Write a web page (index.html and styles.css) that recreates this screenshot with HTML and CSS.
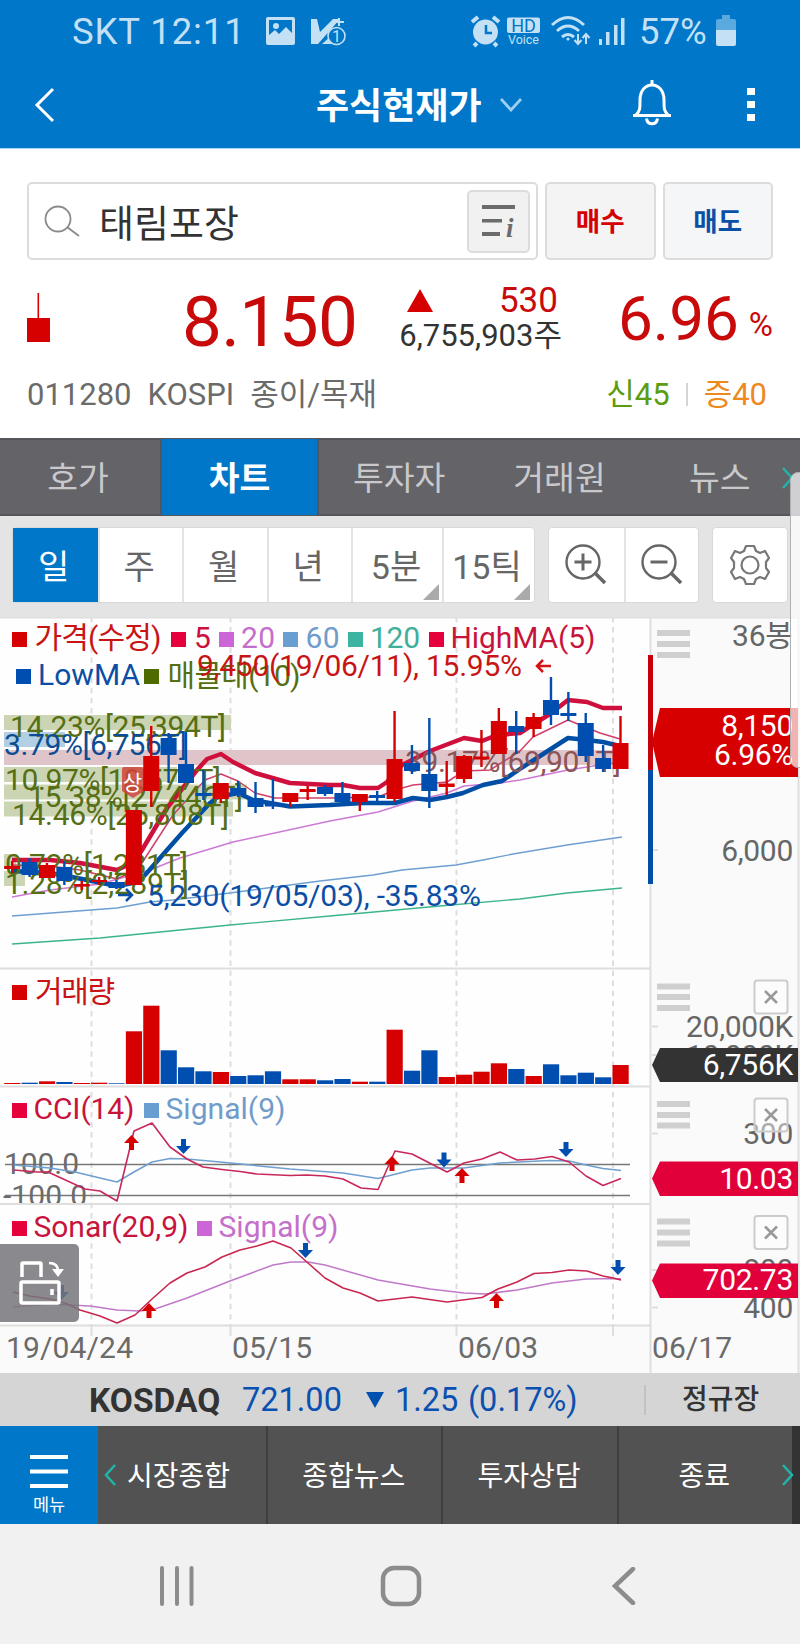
FILE: index.html
```html
<!DOCTYPE html>
<html lang="ko">
<head>
    <meta charset="UTF-8">
    <meta name="viewport" content="width=device-width, initial-scale=1.0">
    <title>주식현재가</title>
    <link rel="stylesheet" href="styles.css">
</head>
<body>
    <header class="top">
        <div class="status-bar">
            <span class="status-text carrier">SKT 12:11</span>
            <svg class="status-left" width="82" height="34" viewBox="265 13 82 34">
                <path fill="#c3e0f5" fill-rule="evenodd" d="M268 16h25a2 2 0 0 1 2 2v24a2 2 0 0 1-2 2h-25a2 2 0 0 1-2-2V18a2 2 0 0 1 2-2zm1 3v15l6-5 4 4 7-7 6 6V19zm4 6a3 3 0 1 1 6 0 3 3 0 0 1-6 0z"/>
                <path fill="#c3e0f5" d="M311 18h6l3 13 13-13h7L318 43h-7z"/>
                <path fill="#c3e0f5" d="M322 43l10-9v9z"/>
                <path stroke="#c3e0f5" stroke-width="2" fill="none" d="M339 17v8M334 21h10"/>
                <circle cx="336.500" cy="35" r="8.500" fill="#0077c8" stroke="#c3e0f5" stroke-width="1.600"/>
                <text x="336.500" y="41" text-anchor="middle" font-size="16" fill="#c3e0f5">1</text>
            </svg>
            <svg class="status-right" width="160" height="34" viewBox="469 13 160 34">
                <!-- alarm -->
                <g fill="none" stroke="#c3e0f5">
                    <circle cx="486.500" cy="31" r="12.500" fill="#c3e0f5" stroke="none"/>
                    <path stroke-width="4" d="M473 21l6-5M500 21l-6-5M478 42l-3 3M495 42l3 3"/>
                    <path stroke="#0077c8" stroke-width="2.500" d="M487 24v8h6"/>
                </g>
                <!-- HD voice -->
                <rect x="508" y="16.500" width="33" height="15.500" rx="2" fill="#c3e0f5"/>
                <text x="524.500" y="30.500" text-anchor="middle" font-size="18" fill="#0077c8">HD</text>
                <text x="524.500" y="43" text-anchor="middle" font-size="12.500" fill="#c3e0f5">Voice</text>
                <!-- wifi -->
                <g fill="none" stroke="#c3e0f5" stroke-width="3">
                    <path d="M553 24q16-15 32 0M558 30q11-10 22 0M563 36q6-5 12 0"/>
                    <circle cx="569" cy="38" r="1.500" fill="#c3e0f5" stroke="none"/>
                    <path stroke-width="2" d="M579 33v10M575.500 39l3.500 4 3.500-4M587 43V33M583.500 37l3.500-4 3.500 4"/>
                </g>
                <!-- signal -->
                <path fill="#c3e0f5" d="M600 38h3v6h-3zM607 31h3.500v13H607zM615 24h3.500v20H615zM622 17h3.500v27H622z"/>
            </svg>
            <span class="status-text battery-text">57%</span>
            <svg class="battery" width="22" height="32" viewBox="0 0 22 32">
                <path fill="#5aa9df" d="M7 0h8v4h4a2 2 0 0 1 2 2v10H1V6a2 2 0 0 1 2-2h4z"/>
                <path fill="#c3e0f5" d="M1 15h20v14a2 2 0 0 1-2 2H3a2 2 0 0 1-2-2z"/>
            </svg>
        </div>
        <div class="title-bar">
            <svg class="back" width="22" height="36" viewBox="0 0 22 36"><path d="M19 2L3 18l16 16" fill="none" stroke="#fff" stroke-width="3"/></svg>
            <h1 class="title">주식현재가</h1>
            <svg class="title-arrow" width="22" height="14" viewBox="0 0 22 14"><path d="M1 1l10 11L21 1" fill="none" stroke="#9fd0f2" stroke-width="2.800"/></svg>
            <svg class="bell" width="40" height="46" viewBox="0 0 40 46">
                <g fill="none" stroke="#fff" stroke-width="3">
                    <path d="M20 0v5M1 35.500h38M4 35c4-4 4-6 4-15 0-9 5-15 12-15s12 6 12 15c0 9 0 11 4 15"/>
                    <path d="M14.500 38.500c1 7 10 7 11 0"/>
                </g>
            </svg>
            <svg class="more" width="8" height="36" viewBox="0 0 8 36"><path fill="#fff" d="M0 1h8v7H0zM0 14h8v7H0zM0 27h8v7H0z"/></svg>
        </div>
    </header>

    <section class="quote">
        <div class="search-row">
            <div class="search-box">
                <svg width="36" height="32" viewBox="0 0 36 32"><g fill="none" stroke="#8a8a8a" stroke-width="1.800"><circle cx="14" cy="14" r="12.500"/><path d="M23 22l12 9"/></g></svg>
                <span class="stock-name">태림포장</span>
                <span class="info-button">
                    <svg width="36" height="36" viewBox="0 0 36 36">
                        <path fill="#6b6b6b" d="M1 2h33v4H1zM1 16h20v3.500H1zM1 29h18v4H1z"/>
                        <text x="25" y="34" font-style="italic" font-weight="bold" font-size="27" fill="#6b6b6b" class="serif">i</text>
                    </svg>
                </span>
            </div>
            <button class="order buy">매수</button>
            <button class="order sell">매도</button>
        </div>
        <div class="price-row">
            <svg class="mini-candle" width="23" height="50" viewBox="0 0 23 50"><path fill="#d60000" d="M10.500 0h1.600v25H23v24H0V25h10.500z"/></svg>
            <span class="price">8.150</span>
            <div class="change">
                <div class="change-top">
                    <svg width="26" height="23" viewBox="0 0 26 23"><path fill="#d60000" d="M13 0l13 23H0z"/></svg>
                    <span>530</span>
                </div>
                <div class="volume">6,755,903주</div>
            </div>
            <span class="rate">6.96</span>
            <span class="percent">%</span>
        </div>
        <div class="info-row">
            <span>011280</span>
            <span>KOSPI</span>
            <span>종이/목재</span>
            <span class="credit">신45</span>
            <span class="bar"></span>
            <span class="margin">증40</span>
        </div>
    </section>

    <nav class="tabs">
        <a class="tab">호가</a>
        <a class="tab active">차트</a>
        <a class="tab">투자자</a>
        <a class="tab">거래원</a>
        <a class="tab">뉴스</a>
        <svg class="tabs-next" width="12" height="22" viewBox="0 0 12 22"><path d="M1 1l9 10-9 10" fill="none" stroke="#1fb5ac" stroke-width="2.500"/></svg>
    </nav>

    <div class="toolbar">
        <div class="group periods">
            <span class="cell on">일</span>
            <span class="cell">주</span>
            <span class="cell">월</span>
            <span class="cell">년</span>
            <span class="cell wide">5분</span>
            <span class="cell wide">15틱</span>
        </div>
        <div class="group zoom">
            <span class="cell">
                <svg width="42" height="42" viewBox="0 0 42 42"><g fill="none" stroke="#666" stroke-width="2.400"><circle cx="18" cy="18" r="16.500"/><path stroke-width="3" d="M9.500 18h17M18 9.500v17"/><path stroke-width="3.500" d="M30 29l10 10"/></g></svg>
            </span>
            <span class="cell">
                <svg width="42" height="42" viewBox="0 0 42 42"><g fill="none" stroke="#666" stroke-width="2.400"><circle cx="18" cy="18" r="16.500"/><path stroke-width="3" d="M9.500 18h17"/><path stroke-width="3.500" d="M30 29l10 10"/></g></svg>
            </span>
        </div>
        <div class="group settings">
            <svg width="42" height="42" viewBox="0 0 42 42">
                <g fill="none" stroke="#777" stroke-width="2.200" stroke-linejoin="round">
                    <circle cx="21" cy="21" r="8.500"/>
                    <path d="M17 2h8l2 5 4 2 5-2 4 7-3 4v6l3 4-4 7-5-2-4 2-2 5h-8l-2-5-4-2-5 2-4-7 3-4v-6l-3-4 4-7 5 2 4-2z"/>
                </g>
            </svg>
        </div>
    </div>

    <main class="chart-area">
        <svg class="chart" id="chart" width="800" height="756" viewBox="0 617 800 756">
            <rect x="0" y="617" width="800" height="756" fill="#fefefe"/>
            <rect x="652" y="617" width="148" height="756" fill="#fafafa"/>
            <rect x="0" y="1326" width="800" height="47" fill="#fafafa"/>

            <!-- grid -->
            <g fill="none" stroke="#dedede" stroke-width="2">
                <path stroke-dasharray="5.500 4.600" d="M91.500 617v709M230.500 617v709M456.500 617v709M613 617v709"/>
                <path d="M0 617.500h800M0 968.500h650M0 1086.500h650M0 1204h650M0 1325.500h650M650.500 617v756M798.500 617v756"/>
                <path d="M91.500 1326v10M230.500 1326v10M456.500 1326v10M613 1326v10M652 850h6M652 1026.500h6M652 1055h6M652 1133.500h6M652 1270h6M652 1307.500h6"/>
            </g>

            <!-- volume profile -->
            <g fill="#ccd5b3">
                <rect x="4" y="715" width="227" height="15"/>
                <rect x="4" y="767" width="173" height="15"/>
                <rect x="4" y="784.500" width="243" height="15"/>
                <rect x="4" y="801.500" width="229" height="15"/>
                <rect x="4" y="854" width="12" height="15"/>
                <rect x="4" y="871" width="21" height="15"/>
            </g>
            <rect x="4" y="732" width="61" height="15" fill="#b3cfe4"/>
            <rect x="4" y="750" width="618" height="15" fill="#dfc5c9"/>

            <g id="averages"></g>
            <g class="profile-text">
                <text x="10" y="737" textLength="216">14.23%[25,394T]</text>
                <text x="4" y="755" textLength="183" fill="#0b4c94">3.79%[6,756T]</text>
                <text x="5" y="790" textLength="216">10.97%[19,577T]</text>
                <text x="28" y="806.500" textLength="215">15.38%[27,446T]</text>
                <text x="12" y="825" textLength="217">14.46%[25,808T]</text>
                <text x="5" y="875" textLength="183">0.72%[1,281T]</text>
                <text x="5" y="893.500" textLength="184">1.28%[2,289T]</text>
                <text x="405" y="772" textLength="216" fill="#8c5557">39.17%[69,901T]</text>
            </g>
            <path fill="#d0443b" fill-opacity=".85" d="M124 767h17q3 0 3 3v21l-11 7-11-7v-21q0-3 2-3z"/>
            <text x="132.500" y="790" text-anchor="middle" font-size="21" fill="#fff">상</text>
            <g id="candles"></g>

            <!-- legends -->
            <g class="legend">
                <rect x="12" y="632" width="15" height="15" fill="#d60000"/><text x="34.500" y="648" textLength="127" fill="#c81414">가격(수정)</text>
                <rect x="171" y="632" width="15" height="15" fill="#e6003c"/><text x="194" y="647.500" fill="#cc1040">5</text>
                <rect x="219" y="632" width="15" height="15" fill="#cc66d6"/><text x="241" y="647.500" textLength="34" fill="#c46fcb">20</text>
                <rect x="283" y="632" width="15" height="15" fill="#699fd0"/><text x="305.500" y="647.500" textLength="34" fill="#6f9ccb">60</text>
                <rect x="348" y="632" width="15" height="15" fill="#3cb4a0"/><text x="370" y="647.500" textLength="50" fill="#3fae9a">120</text>
                <rect x="429" y="632" width="15" height="15" fill="#e6003c"/><text x="450.500" y="647.500" textLength="145" fill="#c8143c">HighMA(5)</text>
                <rect x="16" y="669" width="15" height="15" fill="#004fb0"/><text x="38" y="685" textLength="102" fill="#0b4ea5">LowMA</text>
                <rect x="144" y="669" width="15" height="15" fill="#4d6b00"/><text x="167.500" y="685.500" textLength="133" fill="#566f14">매물대(10)</text>
                <rect x="12" y="985" width="15" height="15" fill="#d60000"/><text x="35" y="1001.500" textLength="80" fill="#c81414">거래량</text>
                <rect x="12" y="1103" width="15" height="15" fill="#e6003c"/><text x="33.500" y="1118.500" textLength="101" fill="#c8143c">CCI(14)</text>
                <rect x="144" y="1103" width="15" height="15" fill="#699fd0"/><text x="165.500" y="1118.500" textLength="120" fill="#6f9ccb">Signal(9)</text>
                <rect x="12" y="1221" width="15" height="15" fill="#e6003c"/><text x="33.500" y="1236.500" textLength="155" fill="#c8143c">Sonar(20,9)</text>
                <rect x="197" y="1221" width="15" height="15" fill="#cc66d6"/><text x="218.500" y="1236.500" textLength="120" fill="#c46fcb">Signal(9)</text>
                <text x="197" y="676" textLength="325" fill="#c81414">9,450(19/06/11), 15.95%</text>
                <text x="147" y="905.500" textLength="334" fill="#0b4ea5">5,230(19/05/03), -35.83%</text>
            </g>
            <path d="M551 666h-14M543 660l-6 6 6 6" fill="none" stroke="#d61414" stroke-width="2.500"/>
            <path d="M118 895h14M126 889l6 6-6 6" fill="none" stroke="#0b4ea5" stroke-width="2.500"/>

            <g id="volumes"></g>

            <!-- CCI levels -->
            <clipPath id="cciClip"><rect x="0" y="1087" width="650" height="116"/></clipPath>
            <g clip-path="url(#cciClip)">
                <path d="M5 1164.500h625M5 1195.500h625" stroke="#777" stroke-width="1.400"/>
                <text class="level" x="4" y="1174" textLength="75">100.0</text>
                <text class="level" x="3" y="1205.500" textLength="84">-100.0</text>
            </g>
            <g id="indicators"></g>
            <g id="signals"></g>

            <!-- price axis -->
            <path d="M650.500 655v115" stroke="#c8000a" stroke-width="5"/>
            <path d="M650.500 770v114" stroke="#004fa5" stroke-width="5"/>
            <g class="axis">
                <text x="792.500" y="646">36봉</text>
                <text x="793" y="860.500">6,000</text>
                <text x="793" y="1036.500">20,000K</text>
                <text x="793" y="1065.500">10,000K</text>
                <text x="793" y="1143.500">300</text>
                <text x="793" y="1280">800</text>
                <text x="793" y="1318">400</text>
            </g>
            <path fill="#cfcfcf" d="M657 630h33v6h-33zM657 641h33v6h-33zM657 652h33v6h-33zM657 983.500h33v6h-33zM657 994h33v6h-33zM657 1005h33v6h-33zM657 1101h33v6h-33zM657 1112h33v6h-33zM657 1122.500h33v6h-33zM657 1218.500h33v6h-33zM657 1229.500h33v6h-33zM657 1240.500h33v6h-33z"/>
            <g fill="#fff" fill-opacity=".45" stroke="#ccc" stroke-width="2">
                <rect x="754.500" y="980.500" width="33" height="33" rx="3"/>
                <rect x="754.500" y="1098.500" width="33" height="33" rx="3"/>
                <rect x="754.500" y="1216" width="33" height="33" rx="3"/>
            </g>
            <path d="M765 991l12 12M777 991l-12 12M765 1109l12 12M777 1109l-12 12M765 1226.500l12 12M777 1226.500l-12 12" stroke="#999" stroke-width="2.500"/>
            <path fill="#d60000" d="M652 742l8-34h138v69H660z"/>
            <path fill="#333" d="M652 1065l8-17h138v34H660z"/>
            <path fill="#e1003a" d="M652 1178.500l8-17h138v34.500H660zM652 1280.500l8-17h138v34.500H660z"/>
            <g class="axis tag">
                <text x="793" y="736">8,150</text>
                <text x="793" y="765">6.96%</text>
                <text x="793" y="1074.500">6,756K</text>
                <text x="793" y="1188.500">10.03</text>
                <text x="793" y="1290">702.73</text>
            </g>
            <g class="dates">
                <text x="6" y="1358" textLength="127">19/04/24</text>
                <text x="232" y="1358" textLength="80">05/15</text>
                <text x="458" y="1358" textLength="80">06/03</text>
                <text x="652" y="1358" textLength="80">06/17</text>
            </g>
        </svg>
        <div class="rotate">
            <svg width="46" height="44" viewBox="0 0 46 44">
                <g fill="none" stroke="#fff" stroke-width="3.500">
                    <path d="M3 16V3q0-1 1-1h17q1 0 1 1v13"/>
                    <rect x="2" y="21" width="38" height="21" rx="1.500"/>
                    <path d="M33 28v6"/>
                    <path stroke-width="2.500" d="M30 2q9 0 9 8"/>
                </g>
                <path fill="#fff" d="M33 8h12l-6 8z"/>
            </svg>
        </div>
        <div class="drawer-handle"></div>
    </main>

    <div class="index-bar">
        <strong class="index-name">KOSDAQ</strong>
        <span class="index-value">721.00</span>
        <svg width="18" height="16" viewBox="0 0 18 16"><path fill="#0050b0" d="M0 0h18L9 16z"/></svg>
        <span class="index-change">1.25</span>
        <span class="index-rate">(0.17%)</span>
        <span class="session">정규장</span>
    </div>

    <nav class="menu">
        <a class="menu-main">
            <svg width="38" height="34" viewBox="0 0 38 34"><path fill="#fff" d="M0 0h38v4H0zM0 14.500h38v4H0zM0 29h38v4H0z"/></svg>
            <span>메뉴</span>
        </a>
        <a class="menu-item first">
            <svg width="12" height="22" viewBox="0 0 12 22"><path d="M11 1L2 11l9 10" fill="none" stroke="#1fb5ac" stroke-width="2.500"/></svg>
            <span>시장종합</span>
        </a>
        <a class="menu-item"><span>종합뉴스</span></a>
        <a class="menu-item"><span>투자상담</span></a>
        <a class="menu-item last">
            <span>종료</span>
            <svg width="12" height="22" viewBox="0 0 12 22"><path d="M1 1l9 10-9 10" fill="none" stroke="#1fb5ac" stroke-width="2.500"/></svg>
        </a>
    </nav>

    <footer class="system-nav">
        <svg width="36" height="40" viewBox="0 0 36 40"><path d="M3 2v36M18 2v36M32.500 2v36" stroke="#8c8c8c" stroke-width="4" stroke-linecap="round"/></svg>
        <svg width="42" height="42" viewBox="0 0 42 42"><rect x="3" y="3" width="36" height="36" rx="11" fill="none" stroke="#8c8c8c" stroke-width="4.500"/></svg>
        <svg width="26" height="38" viewBox="0 0 26 38"><path d="M22 2L4 19l18 17" fill="none" stroke="#8c8c8c" stroke-width="4.500" stroke-linecap="round"/></svg>
    </footer>

    <script src="chart.js"></script>
</body>
</html>
```
FILE: styles.css
```css
:root {
    --blue: #0077c8;
    --red: #d60000;
    --navy: #004fb0;
}

* {
    box-sizing: border-box;
}

body {
    margin: 0;
    width: 800px;
    font-family: Roboto, "Noto Sans CJK KR", sans-serif;
    background: #fff;
    color: #333;
    line-height: 1;
}

svg {
    display: block;
    flex: none;
}

svg text {
    font-family: Roboto, "Noto Sans CJK KR", sans-serif;
}

svg text.serif {
    font-family: "Liberation Serif", serif;
}

/* header */
.top {
    height: 149px;
    background: var(--blue);
    border-bottom: 1px solid #a5d6f5;
}

.status-bar {
    display: flex;
    align-items: center;
    height: 62px;
    padding: 0 63px 0 72px;
}

.status-text {
    padding-top: 2px;
    font-size: 36.500px;
    color: #c3e0f5;
    white-space: nowrap;
}

.carrier {
    width: 193px;
    letter-spacing: .9px;
}

.status-right {
    margin-left: auto;
}

.battery-text {
    margin-left: 11px;
    width: 76px;
}

.title-bar {
    display: flex;
    align-items: center;
    height: 86px;
    padding: 0 45px 0 34px;
}

.title {
    margin: 0 0 0 260px;
    padding-top: 3px;
    font-size: 36px;
    font-weight: bold;
    color: #fff;
    white-space: nowrap;
}

.title-arrow {
    margin-left: 18px;
}

.bell {
    margin-left: auto;
    margin-right: 75px;
    margin-bottom: 4px;
}

/* quote */
.quote {
    height: 289px;
    padding: 33px 27px 0;
}

.search-row {
    display: flex;
    gap: 7px;
    height: 78px;
}

.search-box {
    display: flex;
    align-items: center;
    width: 511px;
    padding: 0 6px 0 15px;
    border: 2px solid #dcdcdc;
    border-radius: 5px;
}

.stock-name {
    margin-left: 19px;
    padding-top: 5px;
    font-size: 38px;
}

.info-button {
    display: flex;
    align-items: center;
    justify-content: center;
    width: 63px;
    height: 63px;
    margin-left: auto;
    border: 2px solid #dcdcdc;
    border-radius: 5px;
    background: #f1f1f1;
}

.order {
    width: 110.500px;
    padding: 0 0 3px;
    border: 2px solid #dcdcdc;
    border-radius: 5px;
    background: #f4f4f4;
    font-family: inherit;
    font-size: 26.500px;
    font-weight: bold;
}

.buy {
    color: var(--red);
}

.sell {
    color: #0b50a5;
    background: #f4f6f8;
}

.price-row {
    display: flex;
    height: 108px;
    color: #c80a0a;
}

.mini-candle {
    margin-top: 33px;
}

.price {
    width: 308px;
    padding-top: 26px;
    font-size: 71px;
    letter-spacing: -.6px;
    text-align: right;
}

.change {
    width: 205px;
    padding-top: 23px;
}

.change-top {
    display: flex;
    align-items: center;
    justify-content: space-between;
    height: 35px;
    padding-left: 50px;
    padding-right: 4px;
    font-size: 35px;
}

.volume {
    padding-left: 42px;
    font-size: 31px;
    line-height: 36px;
    color: #333;
    white-space: nowrap;
}

.rate {
    margin-left: 56px;
    padding-top: 28px;
    font-size: 62px;
}

.percent {
    margin-left: 10px;
    padding-top: 48px;
    font-size: 33px;
}

.info-row {
    display: flex;
    align-items: center;
    gap: 16px;
    height: 50px;
    padding-top: 3px;
    font-size: 31px;
    color: #6b6b6b;
}

.credit {
    margin-left: auto;
    color: #5a9c12;
}

.bar {
    width: 2px;
    height: 23px;
    background: #d5d5d5;
}

.margin {
    margin-right: 6px;
    color: #ec8a1e;
}

/* tabs */
.tabs {
    position: relative;
    display: flex;
    height: 78px;
    background: #636368;
    border-top: 2px solid #56565a;
    border-bottom: 2px solid #56565a;
}

.tab {
    display: flex;
    flex: 1;
    align-items: center;
    justify-content: center;
    padding-top: 4px;
    font-size: 33.500px;
    color: #c9c9cc;
}

.tab:first-child {
    flex: 0 0 162px;
    padding-right: 4px;
    border-right: 2px solid #56565a;
}

.tab.active {
    flex: 0 0 157px;
    margin: -1px 0;
    border-right: 2px solid #56565a;
    background: var(--blue);
    color: #fff;
    font-weight: bold;
}

.tabs-next {
    position: absolute;
    top: 27px;
    right: 6px;
}

/* period and zoom buttons */
.toolbar {
    display: flex;
    gap: 13px;
    height: 101px;
    padding: 11px 12px 14px;
    background: #e4e4e4;
}

.group {
    display: flex;
    background: #fff;
    border: 1px solid #d8d8d8;
    border-radius: 4px;
}

.cell {
    position: relative;
    display: flex;
    align-items: center;
    justify-content: center;
    width: 84.500px;
    font-size: 34px;
    color: #666;
    border-left: 2px solid #e3e3e3;
}

.periods .cell {
    padding: 4px 3px 0 0;
}

.cell:first-child {
    border-left: none;
}

.cell.on {
    background: var(--blue);
    color: #fff;
}

.cell.wide {
    width: 91px;
}

/* corner mark of the cells with a list */
.cell.wide::after {
    content: "";
    position: absolute;
    right: 3px;
    bottom: 2px;
    border-style: solid;
    border-width: 0 0 16px 16px;
    border-color: transparent transparent #aaa transparent;
}

.periods {
    width: 523px;
}

.zoom .cell {
    width: 74.500px;
}

.settings {
    width: 76px;
    align-items: center;
    justify-content: center;
}

/* chart */
.chart-area {
    position: relative;
    height: 756px;
}

.legend text,
.profile-text text,
.axis text,
.dates text,
.level {
    font-size: 30px;
}

.profile-text {
    fill: #566f14;
}

.axis {
    fill: #666;
    text-anchor: end;
}

.axis text {
    letter-spacing: -.3px;
}

.axis.tag {
    fill: #fff;
}

.dates,
.level {
    fill: #6b6b6b;
}

.rotate {
    position: absolute;
    left: 0;
    top: 627px;
    display: flex;
    align-items: center;
    width: 79px;
    height: 78px;
    padding-left: 19px;
    border-radius: 0 5px 5px 0;
    background: rgba(118, 118, 122, .85);
}

.drawer-handle {
    position: absolute;
    right: -2px;
    top: -145px;
    width: 12px;
    height: 296px;
    border: 1px solid #b0b0b0;
    border-radius: 8px 0 0 8px;
    background: rgba(255, 255, 255, .7);
}

/* bottom */
.index-bar {
    display: flex;
    align-items: center;
    height: 53px;
    padding-left: 89px;
    background: #d5d5d5;
    font-size: 32.500px;
    color: #0b50b0;
}

.index-name {
    width: 153px;
    padding-top: 3px;
    font-size: 33.500px;
    color: #333;
}

.index-value {
    width: 124px;
    padding-top: 1px;
}

.index-change {
    margin-left: 11px;
    width: 73px;
    padding-top: 1px;
}

.index-rate {
    width: 176px;
    padding-top: 1px;
}

.session {
    padding-left: 36px;
    border-left: 2px solid #c2c2c2;
    font-size: 28px;
    font-weight: 500;
    line-height: 30px;
    color: #333;
}

.menu {
    display: flex;
    height: 98px;
    border-right: 8px solid #333;
    background: #525252;
    color: #fff;
}

.menu-main {
    display: flex;
    flex-direction: column;
    align-items: center;
    width: 98px;
    padding-top: 29px;
    background: var(--blue);
    font-size: 17.500px;
}

.menu-main span {
    margin-top: 8px;
}

.menu-item {
    position: relative;
    display: flex;
    flex: 1;
    align-items: center;
    justify-content: center;
    border-left: 2px solid #3f3f3f;
    font-size: 28px;
}

.menu-item span {
    padding: 4px 2px 0 0;
}

.menu-item.first {
    flex: 0 0 168px;
    gap: 11px;
    justify-content: flex-start;
    padding-left: 6px;
    border-left: none;
}

.menu-item.last svg {
    position: absolute;
    right: -2px;
}

.system-nav {
    display: flex;
    align-items: center;
    justify-content: space-between;
    height: 120px;
    padding: 4px 163px 0 159px;
    background: #f1f1f1;
}

.system-nav svg:nth-child(2) {
    margin-right: 5px;
}
```
FILE: chart.js
```js
const STEP = 17.38;
const FIRST = 12.2;
const RED = '#d60000';
const BLUE = '#004fb0';

// [color, body top, body bottom, high, low, volume]
const bars = [
    ['r', 866, 869, 861, 873, 1], ['b', 862, 875, 858, 877, 1.3], ['r', 865, 878, 863, 878, 2.7],
    ['b', 867, 881, 861, 885, 2], ['r', 884, 886.5, 881, 890, 1], ['r', 880, 882, 877, 885, 1.3],
    ['b', 882, 888, 880, 889, .7], ['r', 810, 885, 810, 885, 52.7], ['r', 756, 791, 726, 807, 78.3],
    ['b', 738, 755, 733, 783, 33.7], ['b', 764, 783, 732, 783, 16.7], ['b', 793, 796, 770, 800, 12.7],
    ['r', 783, 799, 783, 803, 12], ['b', 788, 795, 781, 797, 8], ['b', 798, 807, 782, 813, 8.7],
    ['b', 803.5, 806.5, 779, 809, 12.7], ['r', 793, 802, 793, 807, 4.7], ['r', 789, 792, 786, 800, 4.7],
    ['b', 787, 794, 785, 796, 3.7], ['b', 793, 802, 782, 803, 5], ['r', 794, 802, 794, 811, 2.3],
    ['b', 795, 798, 791, 802, 2.3], ['r', 759, 799, 711, 802, 54.3], ['b', 763, 771, 745, 774, 13.3],
    ['b', 774, 791, 718, 808, 33.7], ['r', 783.5, 787, 761, 795, 7], ['r', 756, 779, 755, 783, 9.3],
    ['r', 756.5, 759.5, 730, 767, 12.3], ['r', 721, 754, 708, 754, 20.7], ['b', 726, 732, 711, 754, 15],
    ['r', 717, 729, 713, 737, 8], ['b', 700, 715, 677, 725, 19.7], ['b', 713, 716, 692, 721, 8.7],
    ['b', 723, 756, 713, 762, 11.3], ['b', 758, 769, 745, 772, 6.7], ['r', 743, 769, 716, 769, 19]
];

const averages = [
    ['#3cb48c', 1.4, '12,944 100,938 230,925 330,916 440,906 520,899 567,893 622,888'],
    ['#6f9fd0', 1.4, '12,916 117,908 150,902 173,900 230,893 320,881 373,875 402,870 456,865 483,860 513,854 567,845 622,837'],
    ['#cc7ad6', 1.4, '12,897 50,890 100,884 150,870 180,858 233,842 330,821 378,812 413,801 447,793 464,786 500,783 520,780 568,770 600,765 622,762'],
    ['#004fa5', 4.5, '12,871 50,873 77,878 117,886 138,882 145,875 182,833 210,803 218,797 238,793 253,800 290,806.5 330,805 363,803 395,803 413,798 430,800 447,797 463,793 483,785 502,781 520,769 540,756 568,738 587,740 603,742 620,746'],
    ['#d0103c', 4.5, '12,860 50,860 80,863 117,870 134,862 142,850 167,808 197,770 207,759 221,754 233,762 255,773 290,783 330,785 343,785 360,788 378,788 387,782 402,765 430,751 464,738 482,741 497,735 520,733 537,722 550,714 568,700 587,702 603,708 622,708'],
    ['#d0406a', 1.5, '12,865 50,866 80,870 117,879 138,869 173,815 205,780 221,774 238,781 255,793 275,798 330,798 378,797 395,790 413,785 447,782 464,771 490,770 520,751 533,737 568,720 600,733 620,739']
];

const indicators = [
    ['#6f9fd0', 1.5, '14,1165 50,1168 75,1172 100,1178 117,1182 134,1172 152,1162 170,1158.5 187,1159 220,1162 290,1169 343,1173 378,1178.5 412,1170 430,1168 464,1168 500,1163 550,1160.5 569,1161 586,1165 603,1168.5 621,1170.5'],
    ['#c8285a', 1.6, '14,1170 37,1172 48,1172 85,1189 100,1191 117,1201 134,1131 152,1123 170,1147 187,1159 203,1167 222,1169.5 240,1171.5 257,1174 290,1175.5 307,1175 325,1176 343,1179 361,1188 378,1189.5 395,1151 412,1154 447,1172 464,1163 482,1159 500,1152 517,1160 535,1159 552,1156.5 569,1162 586,1176 603,1185.5 621,1178.5'],
    ['#c07ac8', 1.5, '13,1307 50,1304 90,1306 117,1310 140,1311 155,1309 187,1298 230,1281 273,1265 291,1262 308,1262 325,1265 378,1280 430,1289 464,1293 485,1294 517,1290 552,1283 586,1279 613,1278.5 621,1279'],
    ['#c82850', 1.6, '13,1292 30,1296 50,1299 65,1303 80,1310 100,1316 117,1323 135,1315 152,1299 170,1283 187,1273 205,1267 222,1257 240,1250 257,1246 273,1241 291,1248 308,1263 325,1278 343,1288 360,1293 378,1301 395,1299 412,1297 447,1302 482,1297.5 498,1289 517,1282 534,1273.5 552,1272.5 569,1270 587,1271 603,1276 613,1278 621,1280']
];

// buy arrows point up, sell arrows point down; y is the top edge
const signals = [
    ['up', 131.5, 1135], ['up', 392, 1156], ['up', 462, 1168], ['up', 149, 1303], ['up', 496.5, 1293],
    ['down', 183.5, 1139], ['down', 444, 1152.5], ['down', 566, 1142], ['down', 305.5, 1243],
    ['down', 618, 1260], ['down', 61.5, 1285]
];

function add(parent, name, attrs) {
    const el = document.createElementNS('http://www.w3.org/2000/svg', name);
    for (const key in attrs) el.setAttribute(key, attrs[key]);
    document.getElementById(parent).appendChild(el);
}

function drawLines(parent, lines) {
    lines.forEach(([color, width, points]) => {
        add(parent, 'polyline', { points, fill: 'none', stroke: color, 'stroke-width': width, 'stroke-linejoin': 'round' });
    });
}

bars.forEach(([color, top, bottom, high, low, volume], i) => {
    const x = FIRST + STEP * i;
    const fill = color === 'r' ? RED : BLUE;
    add('candles', 'rect', { x: x - 1.2, y: high, width: 2.4, height: low - high, fill });
    add('candles', 'rect', { x: x - 8, y: top, width: 16, height: bottom - top, fill });
    add('volumes', 'rect', { x: x - 8, y: 1084 - volume, width: 16.2, height: volume, fill });
});

drawLines('averages', averages);
drawLines('indicators', indicators);

signals.forEach(([dir, x, y]) => {
    const d = dir === 'up'
        ? `M${x} ${y}l7.500 8h-5v7h-5v-7h-5z`
        : `M${x} ${y + 15}l7.500-8h-5v-7h-5v7h-5z`;
    add('signals', 'path', { d, fill: dir === 'up' ? RED : BLUE });
});
```
